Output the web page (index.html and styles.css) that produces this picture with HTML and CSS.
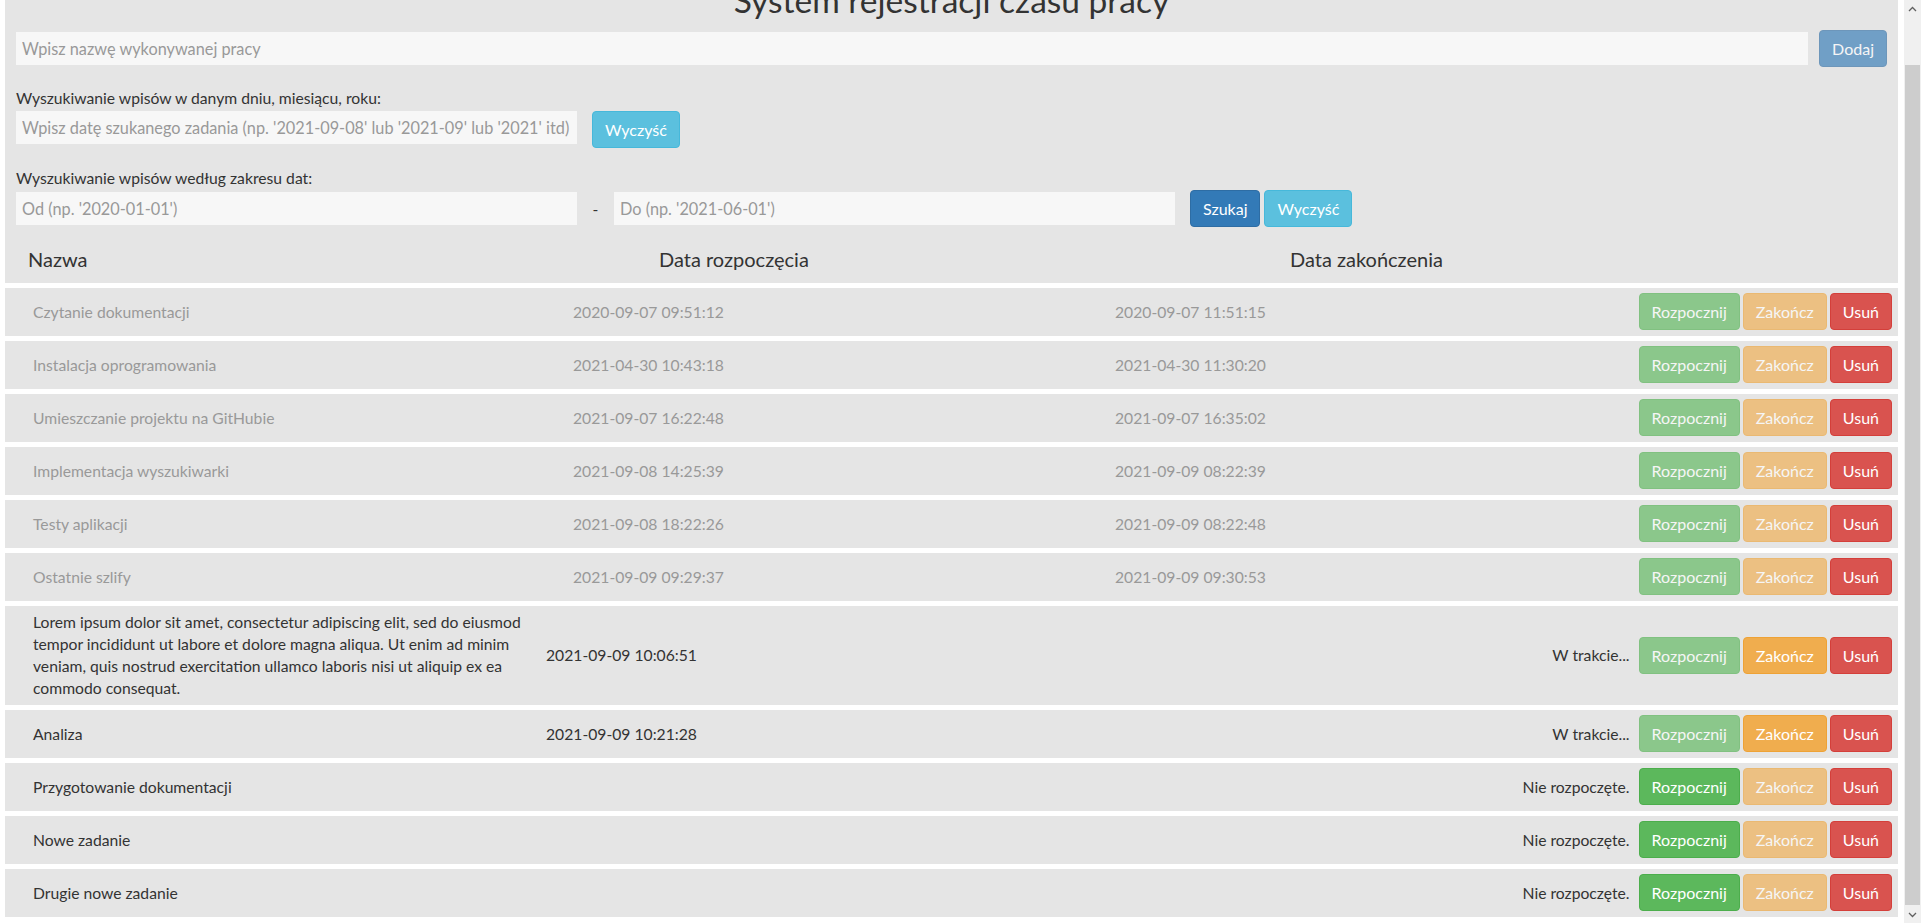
FILE: index.html
```html
<!DOCTYPE html>
<html lang="pl">
<head>
<meta charset="utf-8">
<title>System rejestracji czasu pracy</title>
<link rel="stylesheet" href="styles.css">
</head>
<body>
<div class="window">
  <div class="page">
    <div class="panel">
      <h1 class="title">System rejestracji czasu pracy</h1>
      <div class="add-row">
        <input class="field field-grow" type="text" placeholder="Wpisz nazwę wykonywanej pracy">
        <button class="btn btn-primary is-disabled">Dodaj</button>
      </div>
      <div class="search search-day">
        <label class="search-label">Wyszukiwanie wpisów w danym dniu, miesiącu, roku:</label>
        <div class="search-row top">
          <input class="field field-half" type="text" placeholder="Wpisz datę szukanego zadania (np. '2021-09-08' lub '2021-09' lub '2021' itd)">
          <button class="btn btn-info">Wyczyść</button>
        </div>
      </div>
      <div class="search search-range">
        <label class="search-label">Wyszukiwanie wpisów według zakresu dat:</label>
        <div class="search-row">
          <input class="field field-half" type="text" placeholder="Od (np. '2020-01-01')">
          <span class="dash">-</span>
          <input class="field field-half" type="text" placeholder="Do (np. '2021-06-01')">
          <div class="btn-pair">
            <button class="btn btn-primary">Szukaj</button>
            <button class="btn btn-info">Wyczyść</button>
          </div>
        </div>
      </div>
    </div>
    <div class="thead">
      <div class="th">Nazwa</div>
      <div class="th">Data rozpoczęcia</div>
      <div class="th">Data zakończenia</div>
    </div>
    <div class="list">
      <div class="row done">
        <div class="c-name">Czytanie dokumentacji</div>
        <div class="c-start">2020-09-07 09:51:12</div>
        <div class="c-end">2020-09-07 11:51:15</div>
        <div class="actions"><button class="btn btn-success is-disabled">Rozpocznij</button><button class="btn btn-warning is-disabled">Zakończ</button><button class="btn btn-danger">Usuń</button></div>
      </div>
      <div class="row done">
        <div class="c-name">Instalacja oprogramowania</div>
        <div class="c-start">2021-04-30 10:43:18</div>
        <div class="c-end">2021-04-30 11:30:20</div>
        <div class="actions"><button class="btn btn-success is-disabled">Rozpocznij</button><button class="btn btn-warning is-disabled">Zakończ</button><button class="btn btn-danger">Usuń</button></div>
      </div>
      <div class="row done">
        <div class="c-name">Umieszczanie projektu na GitHubie</div>
        <div class="c-start">2021-09-07 16:22:48</div>
        <div class="c-end">2021-09-07 16:35:02</div>
        <div class="actions"><button class="btn btn-success is-disabled">Rozpocznij</button><button class="btn btn-warning is-disabled">Zakończ</button><button class="btn btn-danger">Usuń</button></div>
      </div>
      <div class="row done">
        <div class="c-name">Implementacja wyszukiwarki</div>
        <div class="c-start">2021-09-08 14:25:39</div>
        <div class="c-end">2021-09-09 08:22:39</div>
        <div class="actions"><button class="btn btn-success is-disabled">Rozpocznij</button><button class="btn btn-warning is-disabled">Zakończ</button><button class="btn btn-danger">Usuń</button></div>
      </div>
      <div class="row done">
        <div class="c-name">Testy aplikacji</div>
        <div class="c-start">2021-09-08 18:22:26</div>
        <div class="c-end">2021-09-09 08:22:48</div>
        <div class="actions"><button class="btn btn-success is-disabled">Rozpocznij</button><button class="btn btn-warning is-disabled">Zakończ</button><button class="btn btn-danger">Usuń</button></div>
      </div>
      <div class="row done">
        <div class="c-name">Ostatnie szlify</div>
        <div class="c-start">2021-09-09 09:29:37</div>
        <div class="c-end">2021-09-09 09:30:53</div>
        <div class="actions"><button class="btn btn-success is-disabled">Rozpocznij</button><button class="btn btn-warning is-disabled">Zakończ</button><button class="btn btn-danger">Usuń</button></div>
      </div>
      <div class="row active">
        <div class="c-name">Lorem ipsum dolor sit amet, consectetur adipiscing elit, sed do eiusmod tempor incididunt ut labore et dolore magna aliqua. Ut enim ad minim veniam, quis nostrud exercitation ullamco laboris nisi ut aliquip ex ea commodo consequat.</div>
        <div class="c-start">2021-09-09 10:06:51</div>
        <div class="c-status">W trakcie...</div>
        <div class="actions"><button class="btn btn-success is-disabled">Rozpocznij</button><button class="btn btn-warning">Zakończ</button><button class="btn btn-danger">Usuń</button></div>
      </div>
      <div class="row active">
        <div class="c-name">Analiza</div>
        <div class="c-start">2021-09-09 10:21:28</div>
        <div class="c-status">W trakcie...</div>
        <div class="actions"><button class="btn btn-success is-disabled">Rozpocznij</button><button class="btn btn-warning">Zakończ</button><button class="btn btn-danger">Usuń</button></div>
      </div>
      <div class="row new">
        <div class="c-name">Przygotowanie dokumentacji</div>
        <div class="c-status">Nie rozpoczęte.</div>
        <div class="actions"><button class="btn btn-success">Rozpocznij</button><button class="btn btn-warning is-disabled">Zakończ</button><button class="btn btn-danger">Usuń</button></div>
      </div>
      <div class="row new">
        <div class="c-name">Nowe zadanie</div>
        <div class="c-status">Nie rozpoczęte.</div>
        <div class="actions"><button class="btn btn-success">Rozpocznij</button><button class="btn btn-warning is-disabled">Zakończ</button><button class="btn btn-danger">Usuń</button></div>
      </div>
      <div class="row new">
        <div class="c-name">Drugie nowe zadanie</div>
        <div class="c-status">Nie rozpoczęte.</div>
        <div class="actions"><button class="btn btn-success">Rozpocznij</button><button class="btn btn-warning is-disabled">Zakończ</button><button class="btn btn-danger">Usuń</button></div>
      </div>
    </div>
  </div>
  <div class="scrollbar">
    <div class="sb-arrow"><svg width="9" height="6" viewBox="0 0 9 6"><path d="M1 5 L4.5 1.5 L8 5" fill="none" stroke="#606060" stroke-width="1.3"/></svg></div>
    <div class="sb-track">
      <div class="sb-thumb"></div>
    </div>
    <div class="sb-arrow"><svg width="9" height="6" viewBox="0 0 9 6"><path d="M1 1 L4.5 4.5 L8 1" fill="none" stroke="#606060" stroke-width="1.3"/></svg></div>
  </div>
</div>
</body>
</html>
```
FILE: styles.css
```css
* { box-sizing: border-box; }

html, body {
  margin: 0;
  padding: 0;
  background: #ffffff;
}

body {
  font-family: Lato, "Liberation Sans", Arial, sans-serif;
  font-size: 15.7px;
  color: #333333;
}

.window {
  display: flex;
  height: 923px;
  overflow: hidden;
}

.page {
  width: 1904px;
  flex: none;
  padding: 0 6px 0 5px;
}

/* ---------- top panel ---------- */
.panel {
  background: #e5e5e5;
  padding: 0 11px;
  display: flow-root;
}

.title {
  margin: -20px 0 0;
  font-size: 33.5px;
  line-height: 40px;
  font-weight: 400;
  text-align: center;
  color: #333333;
}

.add-row {
  display: flex;
  align-items: center;
  gap: 11px;
  margin-top: 10px;
}

.field {
  height: 33px;
  border: none;
  background: #f7f7f7;
  padding: 0 6px;
  font-family: inherit;
  font-size: 16.3px;
  color: #555555;
  outline: none;
}

.field::placeholder {
  color: #999999;
}

.field-grow { flex: 1; }
.field-half { width: 561px; flex: none; }

.search-day { margin-top: 22px; }
.search-range { margin-top: 21px; }

.search-label {
  display: block;
  line-height: 18px;
  font-size: 15.7px;
  color: #333333;
}

.search-day .search-label { margin-bottom: 4px; }
.search-range .search-label { margin-bottom: 3px; }

.search-row {
  display: flex;
  align-items: center;
  gap: 15px;
}

.search-row.top { align-items: flex-start; }

.search-range .search-row { gap: 0; }

.dash {
  width: 37px;
  text-align: center;
  color: #333333;
}

.btn-pair {
  display: flex;
  gap: 4px;
  margin-left: 15px;
}

/* ---------- buttons ---------- */
.btn {
  font-family: inherit;
  font-size: 16px;
  line-height: 23px;
  padding: 6px 12px;
  border: 1px solid transparent;
  border-radius: 4px;
  color: #ffffff;
  white-space: nowrap;
  cursor: pointer;
}

.btn.is-disabled { opacity: 0.65; cursor: not-allowed; }

.btn-primary { background: #337ab7; border-color: #2e6da4; }
.btn-info    { background: #5bc0de; border-color: #46b8da; }
.btn-success { background: #5cb85c; border-color: #4cae4c; }
.btn-warning { background: #f0ad4e; border-color: #eea236; }
.btn-danger  { background: #d9534f; border-color: #d43f3a; }

/* ---------- table head ---------- */
.thead {
  display: grid;
  grid-template-columns: repeat(3, 1fr);
  background: #e5e5e5;
  padding: 20px 0 12px;
}

.th {
  padding-left: 23px;
  font-size: 20px;
  line-height: 24px;
  color: #333333;
}

/* ---------- rows ---------- */
.row {
  display: flex;
  align-items: center;
  min-height: 48px;
  margin-top: 5px;
  padding: 5px 6px 6px 28px;
  background: #e5e5e5;
  font-size: 15.7px;
  line-height: 22px;
  color: #333333;
}

.row.done { color: #999999; }

.row.done .c-name { width: 540px; flex: none; }
.row.done .c-start { width: 542px; flex: none; }
.row.done .c-end { flex: 1; }

.row.active .c-name { width: 513px; flex: none; padding-right: 20px; }
.row.active .c-start { flex: none; }

.row.new .c-name { flex: none; }

.c-status {
  flex: 1;
  text-align: right;
  padding-right: 9px;
}

.actions {
  display: flex;
  gap: 3px;
  flex: none;
}

/* ---------- scrollbar ---------- */
.scrollbar {
  width: 17px;
  flex: none;
  display: flex;
  flex-direction: column;
  background: #f0f0f0;
}

.sb-arrow {
  height: 17px;
  flex: none;
  display: flex;
  align-items: center;
  justify-content: center;
}

.sb-track {
  flex: 1;
  padding: 48px 1px 1px;
}

.sb-thumb {
  height: 840px;
  background: #cdcdcd;
}
```
